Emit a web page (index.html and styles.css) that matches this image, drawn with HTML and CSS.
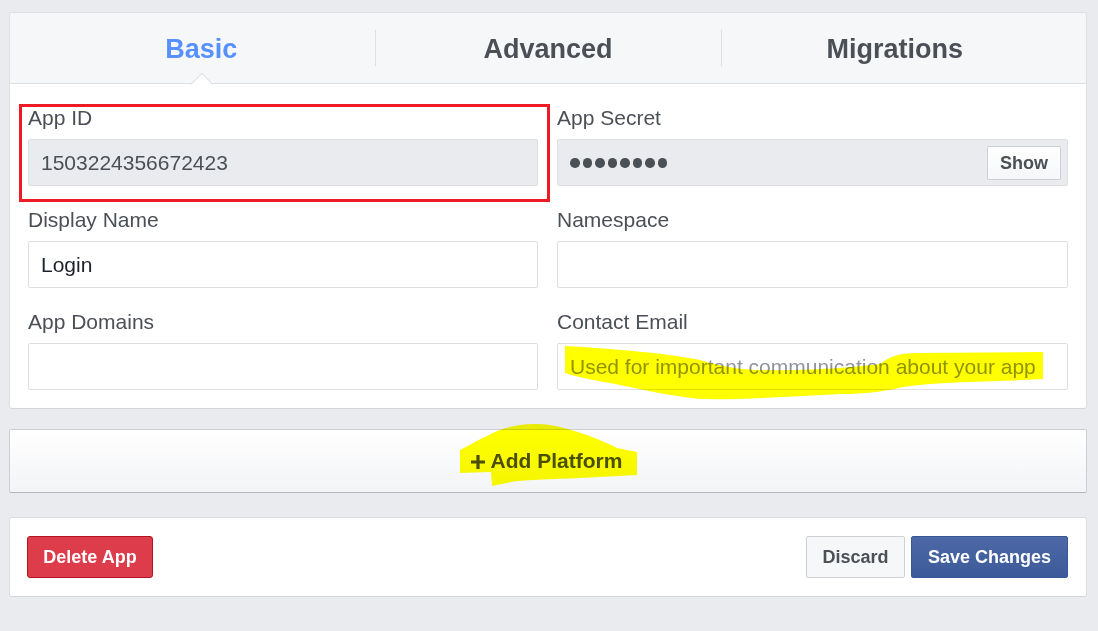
FILE: index.html
```html
<!DOCTYPE html>
<html>
<head>
<meta charset="utf-8">
<title>App Settings</title>
<link rel="stylesheet" href="styles.css">
</head>
<body>
<div class="page">
  <div class="card settings">
    <div class="tabs">
      <div class="tab active">Basic</div>
      <div class="tab">Advanced</div>
      <div class="tab">Migrations</div>
    </div>
    <div class="form">
      <div class="field">
        <div class="label">App ID</div>
        <div class="input disabled">1503224356672423</div>
      </div>
      <div class="field">
        <div class="label">App Secret</div>
        <div class="input disabled secret">
          <span class="dots"><i></i><i></i><i></i><i></i><i></i><i></i><i></i><i></i></span>
          <button class="btn show">Show</button>
        </div>
      </div>
      <div class="field">
        <div class="label">Display Name</div>
        <div class="input">Login</div>
      </div>
      <div class="field">
        <div class="label">Namespace</div>
        <div class="input"></div>
      </div>
      <div class="field">
        <div class="label">App Domains</div>
        <div class="input"></div>
      </div>
      <div class="field">
        <div class="label">Contact Email</div>
        <div class="input placeholder">Used for important communication about your app</div>
      </div>
    </div>
  </div>

  <button class="add-platform">
    <svg class="plus" width="14" height="14" viewBox="0 0 14 14"><path d="M7 0V14M0 7H14" stroke="currentColor" stroke-width="3.2"/></svg>
    <span>Add Platform</span>
  </button>

  <div class="card footer">
    <button class="btn danger">Delete App</button>
    <div class="actions">
      <button class="btn secondary">Discard</button>
      <button class="btn primary">Save Changes</button>
    </div>
  </div>

  <div class="annot-box"></div>
  <svg class="highlight" width="1098" height="631" viewBox="0 0 1098 631">
    <path d="M565,346 C600,348 660,352 700,360 C720,366 740,370 760,370 C800,371 850,368 880,364 C890,356 900,353 920,353 L1043,352 L1043,379 L1000,381 C960,382 910,384 895,389 C880,392 860,394 840,394 C800,396 740,400 700,399 C670,396 640,389 610,383 C590,380 575,376 565,373 Z" fill="#ffff00"/>
    <path d="M460,450 C480,440 495,430 510,427 C525,423 545,423 560,427 C585,433 605,442 617,448 L637,452 L637,475 L580,478 C550,479 530,480 517,481 C505,483 497,485 492,486 L491,472 L460,473 Z" fill="#ffff00"/>
  </svg>
</div>
</body>
</html>
```

FILE: styles.css
```css
* { box-sizing: border-box; }

html, body {
  margin: 0;
  padding: 0;
  background: #e9ebee;
}

body {
  font-family: "Liberation Sans", Arial, Helvetica, sans-serif;
  color: #4b4f56;
}

.page {
  position: relative;
  width: 1098px;
  height: 631px;
  padding: 12px 11px 0 9px;
  overflow: hidden;
}

.card {
  background: #fff;
  border: 1px solid #dddfe2;
  border-bottom-color: #d3d6db;
  border-radius: 3px;
}

.tabs {
  display: flex;
  height: 71px;
  padding: 0 18px;
  background: #f6f7f9;
  border-bottom: 1px solid #dddfe2;
  border-radius: 3px 3px 0 0;
  align-items: center;
}

.tab {
  position: relative;
  flex: 1 1 0;
  height: 70px;
  display: flex;
  align-items: center;
  justify-content: center;
  padding-top: 2px;
  font-size: 27px;
  font-weight: bold;
  color: #4b4f56;
}

.tab + .tab::before {
  content: "";
  position: absolute;
  left: 0;
  top: 17px;
  height: 36px;
  border-left: 1px solid #dddfe2;
}

.tab.active { color: #5890ff; }

.tab.active::after {
  content: "";
  position: absolute;
  left: 50%;
  bottom: -1px;
  width: 15px;
  height: 15px;
  margin-left: -7px;
  background: #fff;
  border-left: 1px solid #dddfe2;
  border-top: 1px solid #dddfe2;
  transform: translateY(8px) rotate(45deg);
}

.form {
  display: grid;
  grid-template-columns: 510px 511px;
  column-gap: 19px;
  row-gap: 22px;
  padding: 22px 18px 18px;
}

.label {
  font-size: 21px;
  line-height: 24px;
  margin-bottom: 9px;
  color: #4b4f56;
}

.input {
  height: 47px;
  border: 1px solid #dddfe2;
  border-radius: 2px;
  padding: 0 12px;
  display: flex;
  align-items: center;
  font-size: 21px;
  color: #1d2129;
  background: #fff;
}

.input.disabled {
  background: #e9ebee;
  color: #4b4f56;
}

.input.placeholder { color: #90949c; }

.input.secret {
  justify-content: space-between;
  padding-right: 6px;
}

.dots {
  display: flex;
  gap: 3px;
  padding-top: 1px;
}

.dots i {
  display: block;
  width: 9.5px;
  height: 9.5px;
  border-radius: 50%;
  background: #4b4f56;
}

.btn {
  font-family: "Liberation Sans", Arial, Helvetica, sans-serif;
  font-weight: bold;
  font-size: 18px;
  height: 42px;
  padding: 0;
  border: 1px solid #ccd0d5;
  border-radius: 3px;
  cursor: pointer;
  line-height: 1;
  white-space: nowrap;
  text-align: center;
}

.btn.show {
  width: 74px;
  height: 34px;
  border-radius: 2px;
  background: linear-gradient(#fff, #f6f7f9);
  color: #4b4f56;
}

.add-platform {
  display: flex;
  width: 100%;
  height: 64px;
  margin-top: 20px;
  align-items: center;
  justify-content: center;
  gap: 6px;
  background: linear-gradient(#fff, #f3f4f6);
  border: 1px solid #ccd0d5;
  border-bottom-color: #b4b8be;
  border-radius: 2px;
  font-family: "Liberation Sans", Arial, Helvetica, sans-serif;
  font-size: 21px;
  font-weight: bold;
  color: #4b4f56;
  padding: 0 3px 0 0;
}

.add-platform .plus { display: block; margin-top: 1px; }

.footer {
  margin-top: 24px;
  display: flex;
  justify-content: space-between;
  align-items: center;
  padding: 18px 18px 18px 17px;
}

.actions {
  display: flex;
  gap: 6px;
}

.btn.danger {
  background: #dd3c4b;
  border-color: #b3131f;
  color: #fff;
  width: 126px;
}

.btn.secondary {
  background: #f6f7f9;
  border-color: #ced0d4;
  color: #4b4f56;
  width: 99px;
  border-radius: 2px;
}

.btn.primary {
  background: linear-gradient(#4d69a6, #3c5a99);
  border-color: #365899;
  color: #fff;
  width: 157px;
  border-radius: 2px;
}

.annot-box {
  position: absolute;
  left: 19px;
  top: 104px;
  width: 531px;
  height: 98px;
  border: 3px solid #ed1c24;
  pointer-events: none;
}

.highlight {
  position: absolute;
  left: 0;
  top: 0;
  mix-blend-mode: multiply;
  pointer-events: none;
}
```
